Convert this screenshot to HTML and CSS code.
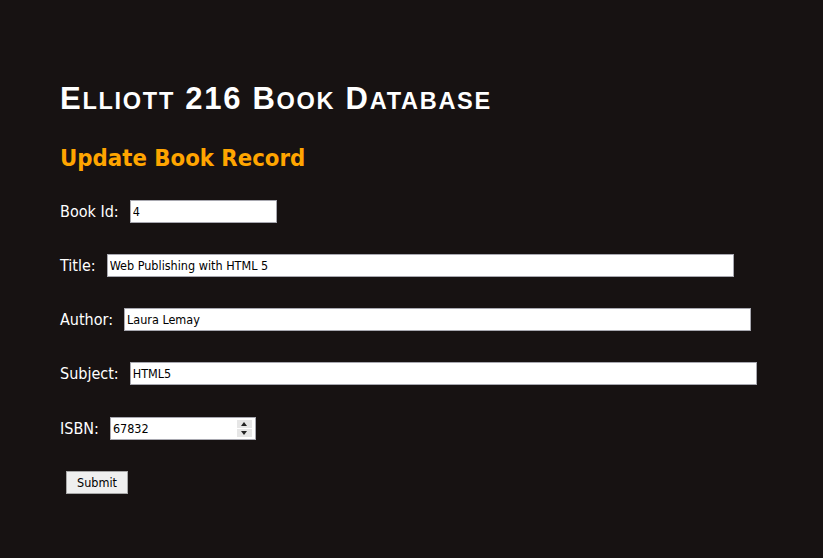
FILE: index.html
```html
<!DOCTYPE html>
<html lang="en">
<head>
<meta charset="utf-8">
<title>Elliott 216 Book Database</title>
<link rel="stylesheet" href="styles.css">
</head>
<body>
<main class="page">
  <h1 class="title"><span class="cap">E</span><span class="sc">lliott</span> 216 <span class="cap">B</span><span class="sc">ook</span> <span class="cap">D</span><span class="sc">atabase</span></h1>
  <h2 class="subtitle">Update Book Record</h2>
  <form class="form">
    <div class="row">
      <label class="label" for="bookid">Book Id:</label>
      <input class="field field-short" id="bookid" type="text" value="4">
    </div>
    <div class="row">
      <label class="label" for="title">Title:</label>
      <input class="field field-long" id="title" type="text" value="Web Publishing with HTML 5">
    </div>
    <div class="row">
      <label class="label" for="author">Author:</label>
      <input class="field field-long" id="author" type="text" value="Laura Lemay">
    </div>
    <div class="row">
      <label class="label" for="subject">Subject:</label>
      <input class="field field-long" id="subject" type="text" value="HTML5">
    </div>
    <div class="row row-isbn">
      <label class="label" for="isbn">ISBN:</label>
      <div class="number">
        <input class="number-input" id="isbn" type="text" value="67832">
        <span class="spinner">
          <span class="spin spin-up"></span>
          <span class="spin spin-down"></span>
        </span>
      </div>
    </div>
    <div class="row row-submit">
      <button class="submit" type="button">Submit</button>
    </div>
  </form>
</main>
</body>
</html>
```
FILE: styles.css
```css
html, body {
  margin: 0;
  padding: 0;
  background: #171212;
}
.page {
  padding: 81px 0 0 60px;
  color: #ffffff;
}
.title {
  margin: 0;
  font-family: "Liberation Sans", Arial, sans-serif;
  font-weight: bold;
  font-size: 31px;
  line-height: 36px;
  letter-spacing: 1.7px;
  color: #ffffff;
}
.sc {
  text-transform: uppercase;
  font-size: 0.76em;
}
.subtitle {
  margin: 24px 0 0 0;
  font-family: "DejaVu Sans Condensed", "DejaVu Sans", sans-serif;
  font-stretch: condensed;
  font-weight: bold;
  font-size: 23.7px;
  line-height: 30px;
  color: #ffa500;
}
.form {
  margin-top: 27px;
  display: flex;
  flex-direction: column;
  gap: 31px;
}
.row {
  display: flex;
  align-items: center;
  height: 23px;
  gap: 11px;
}
.row-isbn {
  margin-top: 1px;
}
.label {
  font-family: "DejaVu Sans Condensed", "DejaVu Sans", sans-serif;
  font-stretch: condensed;
  font-size: 16px;
  color: #ffffff;
}
.field, .number {
  box-sizing: border-box;
  height: 23px;
  border: 1px solid #a8a8b0;
  background: #ffffff;
  margin: 0;
}
.field {
  padding: 0 2px;
  font-family: "DejaVu Sans Condensed", "DejaVu Sans", sans-serif;
  font-stretch: condensed;
  font-size: 12.5px;
  color: #000000;
  outline: none;
}
.field-short { width: 147px; }
.field-long { width: 627px; }
.number {
  width: 146px;
  display: flex;
  align-items: center;
  padding: 0 3px 0 2px;
}
.number-input {
  flex: 1;
  min-width: 0;
  border: 0;
  padding: 0;
  margin: 0;
  outline: none;
  background: transparent;
  font-family: "DejaVu Sans Condensed", "DejaVu Sans", sans-serif;
  font-stretch: condensed;
  font-size: 12.5px;
  color: #000000;
}
.spinner {
  display: flex;
  flex-direction: column;
  width: 15px;
  height: 17px;
  gap: 1px;
}
.spin {
  flex: 1;
  background: #e6e6e6;
  position: relative;
}
.spin::after {
  content: "";
  position: absolute;
  left: 4px;
  top: 2px;
  border-left: 3.5px solid transparent;
  border-right: 3.5px solid transparent;
}
.spin-up::after { border-bottom: 4px solid #222; top: 2px; }
.spin-down::after { border-top: 4px solid #222; top: 2px; }
.row-submit {
  padding-left: 6px;
}
.submit {
  box-sizing: border-box;
  width: 62px;
  height: 23px;
  margin: 0;
  padding: 0;
  border: 1px solid #a8a8a8;
  background: #efefef;
  font-family: "DejaVu Sans Condensed", "DejaVu Sans", sans-serif;
  font-stretch: condensed;
  font-size: 12.5px;
  color: #000000;
}
```
